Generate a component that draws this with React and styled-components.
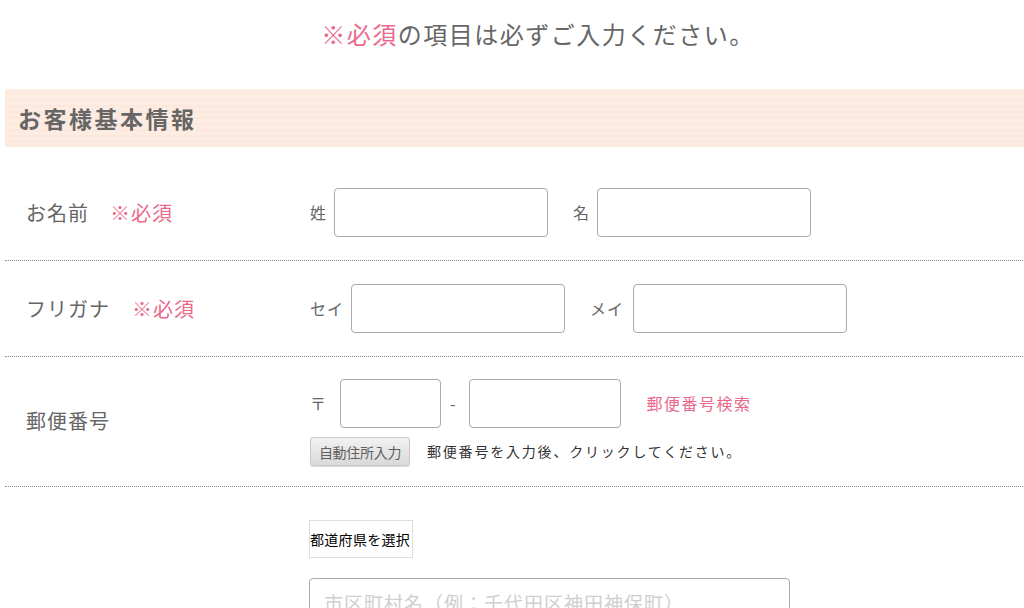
import React from 'react';
import styled, { createGlobalStyle } from 'styled-components';

const colors = {
  text: '#666666',
  dark: '#333333',
  pink: '#e9698b',
  band: '#fce8dc',
  border: '#a9a9a9',
};

const GlobalStyle = createGlobalStyle`
  body {
    margin: 0;
    overflow: hidden;
    background: #fff;
    font-family: "Noto Sans CJK JP", "Noto Sans", sans-serif;
    color: ${colors.text};
  }
`;

const Page = styled.div`
  margin-left: 5px;
  width: 1056px;
`;

const Notice = styled.p`
  margin: 16px 0 37px;
  padding-left: 10px;
  text-align: center;
  font-size: 24px;
  line-height: 36px;
  letter-spacing: 1.5px;
  color: ${colors.text};
`;

const Required = styled.span`
  color: ${colors.pink};
  margin-left: ${p => p.$gap || 0}px;
`;

const SectionHeading = styled.h2`
  margin: 0 0 18px;
  height: 58px;
  display: flex;
  align-items: center;
  padding-left: 13px;
  font-size: 23px;
  font-weight: bold;
  letter-spacing: 2.5px;
  color: ${colors.text};
  background-color: ${colors.band};
  background-image: repeating-linear-gradient(
    to bottom,
    rgba(255, 255, 255, 0.18) 0 4px,
    transparent 4px 6px
  );
`;

const Row = styled.div`
  display: grid;
  grid-template-columns: 304px 1fr;
  align-items: center;
  padding: ${p => p.$pad || '23px 0'};
  border-bottom: ${p => (p.$last ? 'none' : '1px dotted #8a8a8a')};
`;

const Label = styled.div`
  padding-left: 21px;
  padding-bottom: ${p => p.$lift || 0}px;
  font-size: 20px;
  letter-spacing: 1px;
  color: ${colors.text};
  display: flex;
  align-items: center;
`;

const Fields = styled.div`
  display: flex;
  flex-direction: column;
  gap: ${p => p.$gap || 10}px;
  align-items: flex-start;
`;

const Line = styled.div`
  display: flex;
  align-items: center;
  line-height: 1.3;
`;

const FieldLabel = styled.span`
  margin-left: ${p => p.$ml || 0}px;
  margin-right: ${p => p.$mr || 7}px;
  padding-left: 1px;
  font-size: 16px;
  letter-spacing: 1px;
  color: ${colors.text};
`;

const TextInput = styled.input`
  box-sizing: border-box;
  width: ${p => p.$w}px;
  height: 49px;
  border: 1px solid ${colors.border};
  border-radius: 4px;
  padding: 0 14px;
  font-family: inherit;
  font-size: 19px;
  background: #fff;
  outline: none;
  &::placeholder {
    color: #cfcfcf;
    letter-spacing: 1px;
  }
`;

const SearchLink = styled.a`
  margin-left: 26px;
  font-size: 16px;
  letter-spacing: 1.5px;
  color: ${colors.pink};
  text-decoration: none;
`;

const AutoButton = styled.button`
  box-sizing: border-box;
  width: 100px;
  height: 29px;
  margin-left: 1px;
  padding: 0;
  border: 1px solid #cfc6c2;
  border-radius: 3px;
  background: linear-gradient(#f2f2f2, #d9d9d9);
  font-family: inherit;
  font-size: 14px;
  letter-spacing: -0.3px;
  color: #5f5f5f;
  box-shadow: 0 1px 1px rgba(0, 0, 0, 0.15);
`;

const Hint = styled.span`
  margin-left: 17px;
  font-size: 14px;
  letter-spacing: 1.8px;
  color: ${colors.dark};
`;

const Select = styled.select`
  box-sizing: border-box;
  height: 38px;
  width: 104px;
  padding: 0;
  border: 1px solid #e2dcd9;
  border-radius: 0;
  background: #fff;
  appearance: none;
  font-family: inherit;
  font-size: 14px;
  letter-spacing: 0.3px;
  color: #000;
`;

const App = () => (
  <Page>
    <GlobalStyle />
    <Notice>
      <Required>※必須</Required>の項目は必ずご入力ください。
    </Notice>

    <SectionHeading>お客様基本情報</SectionHeading>

    <Row>
      <Label>
        お名前<Required $gap={21}>※必須</Required>
      </Label>
      <Line>
        <FieldLabel>姓</FieldLabel>
        <TextInput $w={214} />
        <FieldLabel $ml={24}>名</FieldLabel>
        <TextInput $w={214} />
      </Line>
    </Row>

    <Row>
      <Label>
        フリガナ<Required $gap={22}>※必須</Required>
      </Label>
      <Line>
        <FieldLabel>セイ</FieldLabel>
        <TextInput $w={214} />
        <FieldLabel $ml={24} $mr={9}>メイ</FieldLabel>
        <TextInput $w={214} />
      </Line>
    </Row>

    <Row $pad="22px 0 20px">
      <Label $lift={5}>郵便番号</Label>
      <Fields $gap={9}>
        <Line>
          <FieldLabel $mr={13}>〒</FieldLabel>
          <TextInput $w={101} />
          <FieldLabel $ml={8} $mr={12}>-</FieldLabel>
          <TextInput $w={152} />
          <SearchLink href="#">郵便番号検索</SearchLink>
        </Line>
        <Line>
          <AutoButton type="button">自動住所入力</AutoButton>
          <Hint>郵便番号を入力後、クリックしてください。</Hint>
        </Line>
      </Fields>
    </Row>

    <Row $pad="33px 0 0" $last>
      <Label />
      <Fields $gap={20}>
        <Select defaultValue="">
          <option value="">都道府県を選択</option>
        </Select>
        <TextInput $w={481} placeholder="市区町村名（例：千代田区神田神保町）" />
      </Fields>
    </Row>
  </Page>
);

export default App;
